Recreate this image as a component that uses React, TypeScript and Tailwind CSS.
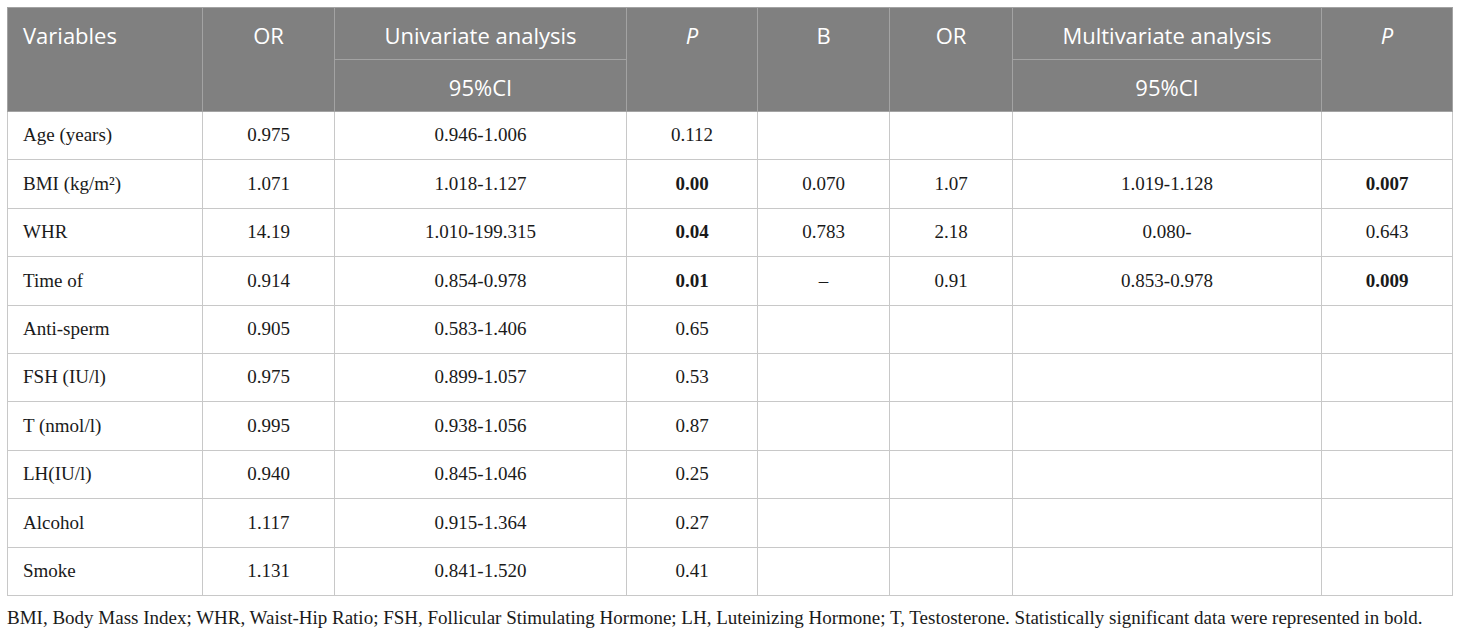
import React from "react";

const rows: { v: string; or: string; ci: string; p: string; pb?: boolean; b?: string; or2?: string; ci2?: string; p2?: string; p2b?: boolean }[] = [
  { v: "Age (years)", or: "0.975", ci: "0.946-1.006", p: "0.112" },
  { v: "BMI (kg/m²)", or: "1.071", ci: "1.018-1.127", p: "0.00", pb: true, b: "0.070", or2: "1.07", ci2: "1.019-1.128", p2: "0.007", p2b: true },
  { v: "WHR", or: "14.19", ci: "1.010-199.315", p: "0.04", pb: true, b: "0.783", or2: "2.18", ci2: "0.080-", p2: "0.643" },
  { v: "Time of", or: "0.914", ci: "0.854-0.978", p: "0.01", pb: true, b: "–", or2: "0.91", ci2: "0.853-0.978", p2: "0.009", p2b: true },
  { v: "Anti-sperm", or: "0.905", ci: "0.583-1.406", p: "0.65" },
  { v: "FSH (IU/l)", or: "0.975", ci: "0.899-1.057", p: "0.53" },
  { v: "T  (nmol/l)", or: "0.995", ci: "0.938-1.056", p: "0.87" },
  { v: "LH(IU/l)", or: "0.940", ci: "0.845-1.046", p: "0.25" },
  { v: "Alcohol", or: "1.117", ci: "0.915-1.364", p: "0.27" },
  { v: "Smoke", or: "1.131", ci: "0.841-1.520", p: "0.41" },
];

function HeadSpan({ children, left, italic }: { children: React.ReactNode; left?: boolean; italic?: boolean }) {
  return (
    <th
      rowSpan={2}
      className={`bg-[#808080] text-white font-normal text-[22px] border border-[#a3a3a3] align-top p-0 ${left ? "text-left" : "text-center"}`}
    >
      <div className={`h-[52px] flex items-center pt-[3px] ${left ? "justify-start pl-[15px]" : "justify-center"} ${italic ? "italic" : ""}`}>
        {children}
      </div>
    </th>
  );
}

export default function App() {
  const th = "bg-[#808080] text-white font-normal text-[22px] border border-[#a3a3a3] align-middle p-0 pt-[3px]";
  const td = "border border-[#c8c8c8] text-center text-[19px] h-[48.4px] align-middle text-[#1a1a1a] p-0";
  return (
    <div className="bg-white w-[1460px] h-[632px] pl-[7px] pt-[7px]" style={{ fontFamily: '"Liberation Serif", serif' }}>
      <table className="border-collapse table-fixed w-[1446px] border border-[#cfcfcf]">
        <colgroup>
          <col className="w-[195px]" />
          <col className="w-[132px]" />
          <col className="w-[292px]" />
          <col className="w-[131px]" />
          <col className="w-[132px]" />
          <col className="w-[123px]" />
          <col className="w-[309px]" />
          <col className="w-[131px]" />
        </colgroup>
        <thead style={{ fontFamily: '"Open Sans", sans-serif' }}>
          <tr className="h-[52px]">
            <HeadSpan left>Variables</HeadSpan>
            <HeadSpan>OR</HeadSpan>
            <th className={th}>Univariate analysis</th>
            <HeadSpan italic>P</HeadSpan>
            <HeadSpan>B</HeadSpan>
            <HeadSpan>OR</HeadSpan>
            <th className={th}>Multivariate analysis</th>
            <HeadSpan italic>P</HeadSpan>
          </tr>
          <tr className="h-[52px]">
            <th className={th}>95%CI</th>
            <th className={th}>95%CI</th>
          </tr>
        </thead>
        <tbody>
          {rows.map((r) => (
            <tr key={r.v}>
              <td className={`${td} pl-[15px]`} style={{ textAlign: "left" }}>{r.v}</td>
              <td className={td}>{r.or}</td>
              <td className={td}>{r.ci}</td>
              <td className={`${td} ${r.pb ? "font-bold" : ""}`}>{r.p}</td>
              <td className={td}>{r.b ?? ""}</td>
              <td className={td}>{r.or2 ?? ""}</td>
              <td className={td}>{r.ci2 ?? ""}</td>
              <td className={`${td} ${r.p2b ? "font-bold" : ""}`}>{r.p2 ?? ""}</td>
            </tr>
          ))}
        </tbody>
      </table>
      <p className="text-[19px] text-[#1a1a1a] mt-[8px] whitespace-nowrap">
        BMI, Body Mass Index; WHR, Waist-Hip Ratio; FSH, Follicular Stimulating Hormone; LH, Luteinizing Hormone; T, Testosterone. Statistically significant data were represented in bold.
      </p>
    </div>
  );
}
